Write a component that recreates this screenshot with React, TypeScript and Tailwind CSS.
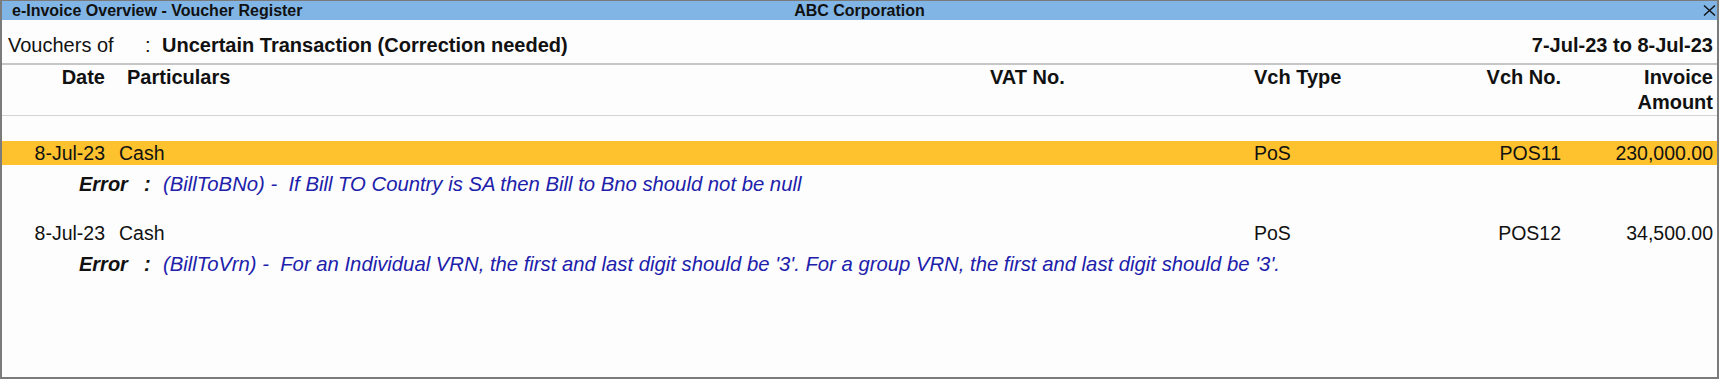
import React from 'react'

type Entry = {
  date: string
  party: string
  vchType: string
  vchNo: string
  amount: string
  code: string
  message: string
  active?: boolean
}

const entries: Entry[] = [
  {
    date: '8-Jul-23',
    party: 'Cash',
    vchType: 'PoS',
    vchNo: 'POS11',
    amount: '230,000.00',
    code: '(BillToBNo)',
    message: 'If Bill TO Country is SA then Bill to Bno should not be null',
    active: true,
  },
  {
    date: '8-Jul-23',
    party: 'Cash',
    vchType: 'PoS',
    vchNo: 'POS12',
    amount: '34,500.00',
    code: '(BillToVrn)',
    message:
      "For an Individual VRN, the first and last digit should be '3'. For a group VRN, the first and last digit should be '3'.",
  },
]

function CloseIcon() {
  return (
    <svg width="13" height="11" viewBox="0 0 13 11" className="block">
      <path d="M1 0.5 L12 10.5 M12 0.5 L1 10.5" stroke="#111" strokeWidth="1.4" fill="none" />
    </svg>
  )
}

export default function App() {
  return (
    <div
      className="w-[1719px] h-[379px] bg-[#fdfdfd] border-t border-x-2 border-b-2 border-[#7b7b7b] flex flex-col text-[#111]"
      style={{ fontFamily: '"Liberation Sans", Arial, sans-serif' }}
    >
      {/* Title bar */}
      <div className="h-[19px] bg-[#80b5e5] grid grid-cols-[1fr_auto_1fr] items-center text-[16px] font-bold leading-[19px]">
        <div className="pl-[10px] whitespace-nowrap">e-Invoice Overview - Voucher Register</div>
        <div className="whitespace-nowrap">ABC Corporation</div>
        <div className="flex justify-end pr-[1px]">
          <CloseIcon />
        </div>
      </div>

      {/* Report info */}
      <div className="h-[45px] pt-[6px] flex items-center text-[20px] border-b-2 border-[#c6c6c6]">
        <div className="w-[143px] pl-[6px] whitespace-nowrap">Vouchers of</div>
        <div className="w-[17px]">:</div>
        <div className="font-bold whitespace-nowrap">Uncertain Transaction (Correction needed)</div>
        <div className="ml-auto pr-[4px] font-bold whitespace-nowrap">7-Jul-23 to 8-Jul-23</div>
      </div>

      {/* Column headers */}
      <div className="h-[51px] flex text-[20px] font-bold leading-[25px] border-b border-[#d4d4d4]">
        <div className="w-[103px] text-right">Date</div>
        <div className="w-[885px] pl-[22px]">Particulars</div>
        <div className="w-[264px]">VAT No.</div>
        <div className="w-[160px]">Vch Type</div>
        <div className="w-[147px] text-right">Vch No.</div>
        <div className="w-[152px] text-right">
          Invoice
          <br />
          Amount
        </div>
      </div>

      {/* Entries */}
      <div className="pt-[25px] flex flex-col">
        {entries.map((e, i) => (
          <div key={i} className="flex flex-col pb-[25px]">
            <div
              className={`h-[24px] flex items-center text-[19.5px] leading-[24px] ${
                e.active ? 'bg-[#fec22e]' : ''
              }`}
            >
              <div className="w-[103px] text-right">{e.date}</div>
              <div className="w-[885px] pl-[14px]">{e.party}</div>
              <div className="w-[264px]" />
              <div className="w-[160px]">{e.vchType}</div>
              <div className="w-[147px] text-right">{e.vchNo}</div>
              <div className="w-[152px] text-right">{e.amount}</div>
            </div>
            <div className="mt-[7px] h-[24px] flex items-center text-[20px] italic leading-[24px] whitespace-nowrap">
              <div className="w-[142px] pl-[77px] font-bold">Error</div>
              <div className="w-[19px] font-bold">:</div>
              <div className="text-[20.3px] text-[#2020ab] whitespace-pre">
                {e.code} -  {e.message}
              </div>
            </div>
          </div>
        ))}
      </div>
    </div>
  )
}
